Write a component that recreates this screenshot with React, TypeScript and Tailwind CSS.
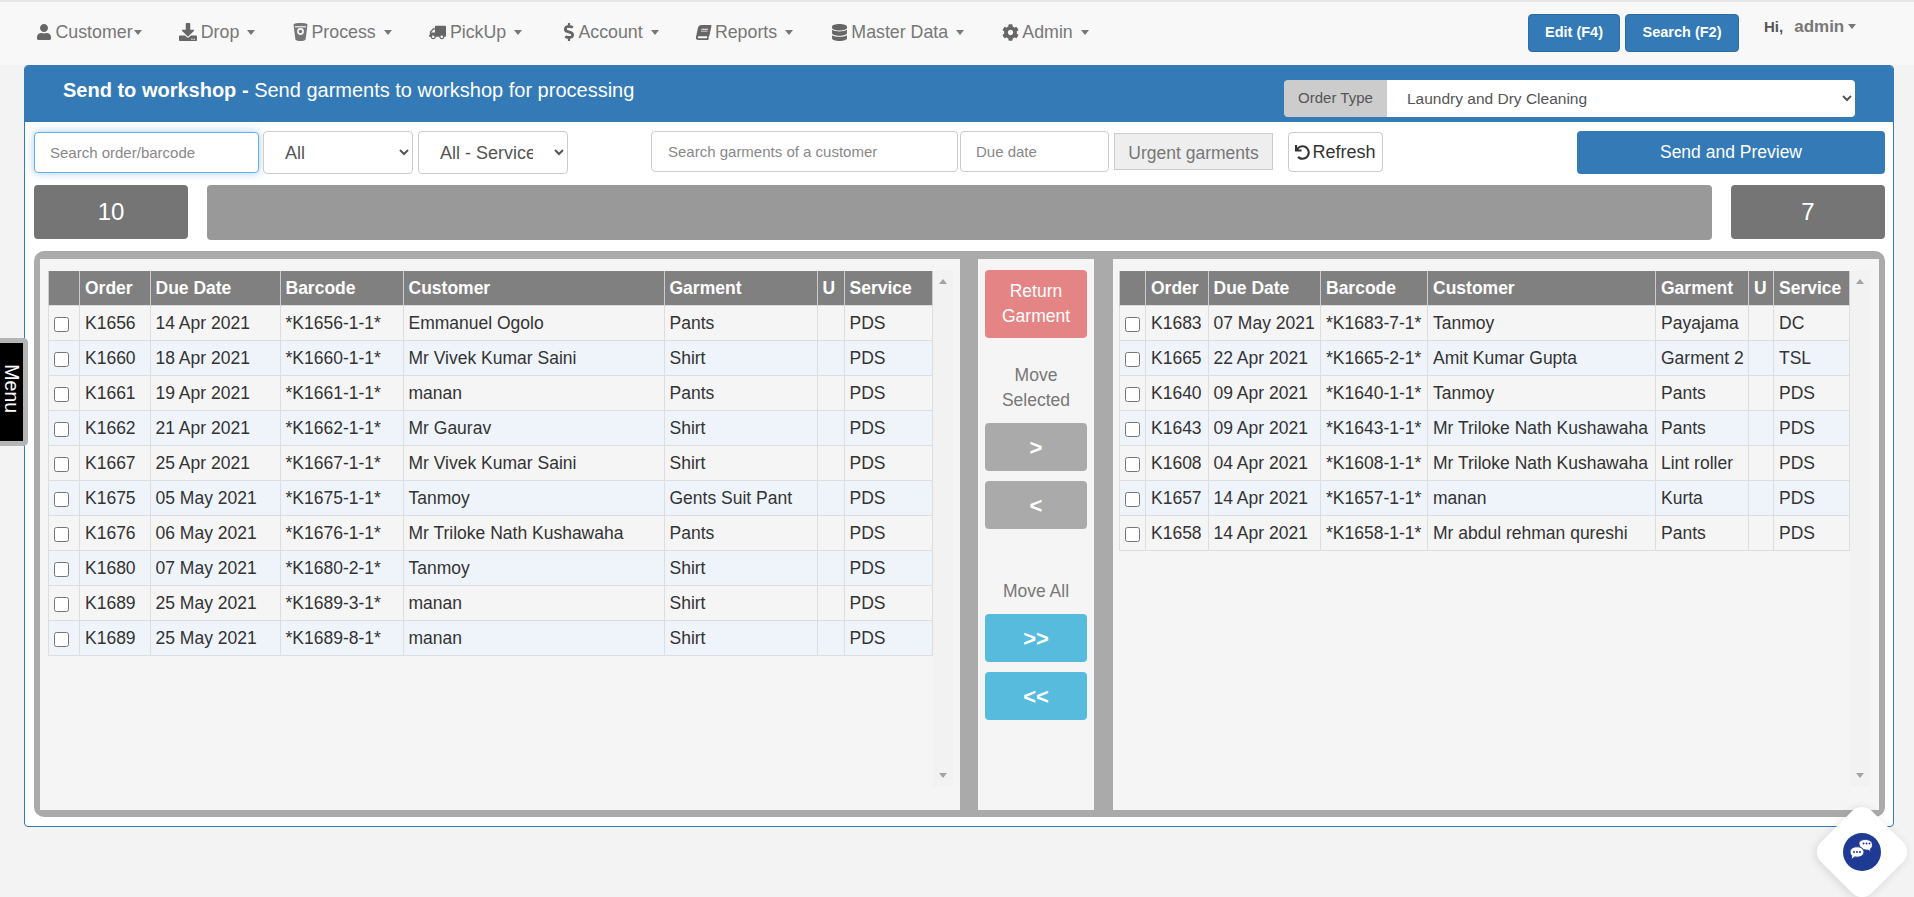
import React from 'react';
import { FaUser, FaDownload, FaTruck, FaDollarSign, FaBook, FaDatabase, FaCog, FaUndo } from 'react-icons/fa';

type Row = [string, string, string, string, string, string];

const LEFT_ROWS: Row[] = [
  ['K1656', '14 Apr 2021', '*K1656-1-1*', 'Emmanuel Ogolo', 'Pants', 'PDS'],
  ['K1660', '18 Apr 2021', '*K1660-1-1*', 'Mr Vivek Kumar Saini', 'Shirt', 'PDS'],
  ['K1661', '19 Apr 2021', '*K1661-1-1*', 'manan', 'Pants', 'PDS'],
  ['K1662', '21 Apr 2021', '*K1662-1-1*', 'Mr Gaurav', 'Shirt', 'PDS'],
  ['K1667', '25 Apr 2021', '*K1667-1-1*', 'Mr Vivek Kumar Saini', 'Shirt', 'PDS'],
  ['K1675', '05 May 2021', '*K1675-1-1*', 'Tanmoy', 'Gents Suit Pant', 'PDS'],
  ['K1676', '06 May 2021', '*K1676-1-1*', 'Mr Triloke Nath Kushawaha', 'Pants', 'PDS'],
  ['K1680', '07 May 2021', '*K1680-2-1*', 'Tanmoy', 'Shirt', 'PDS'],
  ['K1689', '25 May 2021', '*K1689-3-1*', 'manan', 'Shirt', 'PDS'],
  ['K1689', '25 May 2021', '*K1689-8-1*', 'manan', 'Shirt', 'PDS'],
];

const RIGHT_ROWS: Row[] = [
  ['K1683', '07 May 2021', '*K1683-7-1*', 'Tanmoy', 'Payajama', 'DC'],
  ['K1665', '22 Apr 2021', '*K1665-2-1*', 'Amit Kumar Gupta', 'Garment 2', 'TSL'],
  ['K1640', '09 Apr 2021', '*K1640-1-1*', 'Tanmoy', 'Pants', 'PDS'],
  ['K1643', '09 Apr 2021', '*K1643-1-1*', 'Mr Triloke Nath Kushawaha', 'Pants', 'PDS'],
  ['K1608', '04 Apr 2021', '*K1608-1-1*', 'Mr Triloke Nath Kushawaha', 'Lint roller', 'PDS'],
  ['K1657', '14 Apr 2021', '*K1657-1-1*', 'manan', 'Kurta', 'PDS'],
  ['K1658', '14 Apr 2021', '*K1658-1-1*', 'Mr abdul rehman qureshi', 'Pants', 'PDS'],
];

const HEADERS = ['', 'Order', 'Due Date', 'Barcode', 'Customer', 'Garment', 'U', 'Service'];
const LEFT_COLS = [31.5, 70.5, 130, 123, 261, 153, 27, 88];
const RIGHT_COLS = [26, 62.5, 112.5, 107, 228, 93, 25, 75.5];

function BucketIcon() {
  return (
    <svg width="15" height="20" viewBox="0 0 15 20" fill="#777">
      <path d="M0.5 2.5C2 .6 13 .6 14.5 2.5L12.6 17.5C11 19.6 4 19.6 2.4 17.5Z" />
      <circle cx="7.5" cy="9.5" r="3.4" fill="#f8f8f8" />
      <circle cx="7.5" cy="9.5" r="1.7" />
      <rect x="2" y="4.2" width="11" height="1.2" fill="#f8f8f8" />
    </svg>
  );
}

function Caret() {
  return <span className="inline-block w-0 h-0 border-x-[4.5px] border-t-[5px] border-x-transparent border-t-[#777]" />;
}

function NavItem({ icon, label, tight }: { icon: React.ReactNode; label: string; tight?: boolean }) {
  return (
    <div className="flex items-center text-[17.8px] text-[#777]">
      <span className="mr-[3.500px] flex items-center text-[#666]">{icon}</span>
      <span>{label}</span>
      <span className={tight ? 'ml-[1px] flex' : 'ml-[8px] flex'}>
        <Caret />
      </span>
    </div>
  );
}

function Grid({ rows, cols }: { rows: Row[]; cols: number[] }) {
  const width = cols.reduce((a, b) => a + b, 0);
  return (
    <table className="table-fixed border-collapse text-[17.5px] text-[#333]" style={{ width }}>
      <colgroup>
        {cols.map((c, i) => (
          <col key={i} style={{ width: c }} />
        ))}
      </colgroup>
      <thead>
        <tr className="h-[35px] bg-[#808080] text-white">
          {HEADERS.map((h, i) => (
            <th key={i} className="border-x border-[#ccc] pl-[5px] text-left font-bold whitespace-nowrap overflow-hidden">
              {h}
            </th>
          ))}
        </tr>
      </thead>
      <tbody>
        {rows.map((r, i) => (
          <tr key={i} className={i % 2 === 0 ? 'h-[35px] bg-[#f5f5f5]' : 'h-[35px] bg-[#eff4fb]'}>
            <td className="border border-[#ddd] pl-[5px] text-left">
              <input type="checkbox" className="w-[15px] h-[15px] align-middle" />
            </td>
            <td className="border border-[#ddd] pl-[5px] whitespace-nowrap">{r[0]}</td>
            <td className="border border-[#ddd] pl-[5px] whitespace-nowrap">{r[1]}</td>
            <td className="border border-[#ddd] pl-[5px] whitespace-nowrap">{r[2]}</td>
            <td className="border border-[#ddd] pl-[5px] whitespace-nowrap">{r[3]}</td>
            <td className="border border-[#ddd] pl-[5px] whitespace-nowrap">{r[4]}</td>
            <td className="border border-[#ddd]"></td>
            <td className="border border-[#ddd] pl-[5px] whitespace-nowrap">{r[5]}</td>
          </tr>
        ))}
      </tbody>
    </table>
  );
}

function ScrollTrack() {
  return (
    <div className="w-[20px] h-[515px] bg-[#f2f2f2] flex flex-col items-center justify-between pt-[8px] pb-[8px]">
      <span className="w-0 h-0 border-x-[4.5px] border-b-[5px] border-x-transparent border-b-[#a3a3a3]" />
      <span className="w-0 h-0 border-x-[4.5px] border-t-[5px] border-x-transparent border-t-[#a3a3a3]" />
    </div>
  );
}

function MoveButton({ label, color }: { label: string; color: string }) {
  return (
    <button className={`w-full h-[48px] rounded-[4px] text-white text-[22px] font-bold ${color}`}>{label}</button>
  );
}

export default function App() {
  return (
    <div className="relative h-[897px] overflow-hidden bg-[#f3f3f3] font-['Liberation_Sans',Arial,sans-serif]">
      {/* Top nav */}
      <nav className="h-[65px] bg-[#f8f8f8] border-t-2 border-[#e7e7e7] flex items-start pl-[36px] pr-[40px]">
        <div className="flex gap-[37.7px] mt-[17px]">
          <NavItem icon={<FaUser size={16} />} label="Customer" tight />
          <NavItem icon={<FaDownload size={18} />} label="Drop" />
          <NavItem icon={<BucketIcon />} label="Process" />
          <NavItem icon={<FaTruck size={17} className="-scale-x-100" />} label="PickUp" />
          <NavItem icon={<FaDollarSign size={18} className="-mr-[3px]" />} label="Account" />
          <NavItem icon={<FaBook size={15} className="-skew-x-12" />} label="Reports" />
          <NavItem icon={<FaDatabase size={17} />} label="Master Data" />
          <NavItem icon={<FaCog size={17} />} label="Admin" />
        </div>
        <div className="ml-auto flex items-start mt-[12px]">
          <button className="w-[92px] h-[38px] rounded-[4px] bg-[#337ab7] text-white text-[14.5px] font-bold border border-[#2e6da4]">
            Edit (F4)
          </button>
          <button className="ml-[5px] w-[114px] h-[38px] rounded-[4px] bg-[#337ab7] text-white text-[14.5px] font-bold border border-[#2e6da4]">
            Search (F2)
          </button>
          <div className="ml-[25px] w-[110px] flex items-center text-[#666]">
            <span className="text-[15px] font-bold text-[#555]">Hi,</span>
            <span className="ml-[11px] text-[17px] font-bold text-[#777]">admin</span>
            <span className="ml-[4px] flex">
              <Caret />
            </span>
          </div>
        </div>
      </nav>

      {/* Main panel */}
      <div className="ml-[24px] mr-[20px] h-[762px] bg-white border border-[#337ab7] rounded-[4px] overflow-hidden">
        <div className="h-[56px] bg-[#337ab7] flex items-start pl-[38px] pr-[38px] text-white">
          <div className="mt-[11px] text-[20px] leading-[26px]">
            <span className="font-bold">Send to workshop - </span>
            <span>Send garments to workshop for processing</span>
          </div>
          <div className="ml-auto mt-[14px] w-[571px] h-[37px] flex rounded-[4px] overflow-hidden">
            <span className="w-[103px] bg-[#ccc] text-[#555] text-[15px] flex items-center justify-center">Order Type</span>
            <select className="flex-1 bg-white text-[#555] text-[15.5px] pl-[16px] pr-[6px]">
              <option>Laundry and Dry Cleaning</option>
            </select>
          </div>
        </div>

        <div className="pl-[9px] pr-[8px]">
          {/* Filters */}
          <div className="mt-[9px] flex items-start h-[43px]">
            <input
              placeholder="Search order/barcode"
              className="mt-[1px] w-[225px] h-[41px] rounded-[4px] border border-[#66afe9] shadow-[0_0_8px_rgba(102,175,233,0.6)] bg-white px-[15px] text-[15px] placeholder:text-[#888]"
            />
            <select className="ml-[4px] w-[150px] h-[43px] rounded-[4px] border border-[#ccc] bg-white pl-[17px] pr-[4px] text-[18px] text-[#555]">
              <option>All</option>
            </select>
            <select className="ml-[5px] w-[150px] h-[43px] rounded-[4px] border border-[#ccc] bg-white pl-[17px] pr-[18px] text-[18px] text-[#555]">
              <option>All - Service</option>
            </select>
            <input
              placeholder="Search garments of a customer"
              className="ml-[83px] w-[307px] h-[41px] rounded-[4px] border border-[#ccc] bg-white px-[16px] text-[15px] placeholder:text-[#888]"
            />
            <input
              placeholder="Due date"
              className="ml-[2px] w-[149px] h-[41px] rounded-[4px] border border-[#ccc] bg-white px-[15px] text-[15px] placeholder:text-[#888]"
            />
            <button className="ml-[5px] mt-[2px] w-[159px] h-[37px] pt-[3px] bg-[#eee] border border-[#ccc] text-[17.5px] text-[#777]">
              Urgent garments
            </button>
            <button className="ml-[15px] mt-[1px] w-[95px] h-[40px] rounded-[4px] bg-white border border-[#ccc] text-[18px] text-[#333] flex items-center justify-center">
              <FaUndo size={15} className="mr-[2px]" />
              Refresh
            </button>
            <button className="ml-auto w-[308px] h-[43px] rounded-[4px] bg-[#337ab7] text-white text-[17.5px]">
              Send and Preview
            </button>
          </div>

          {/* Counters */}
          <div className="mt-[11px] flex h-[55px] text-white text-[24px]">
            <div className="w-[154px] h-[54px] rounded-[4px] bg-[#757575] flex items-center justify-center">10</div>
            <div className="ml-[19px] flex-1 rounded-[4px] bg-[#999]"></div>
            <div className="ml-[19px] w-[154px] h-[54px] rounded-[4px] bg-[#757575] flex items-center justify-center">7</div>
          </div>

          {/* Lists */}
          <div className="mt-[11px] h-[566px] bg-[#aaa] rounded-[10px] pt-[8px] pb-[7px] px-[6px] flex">
            <div className="w-[920px] bg-[#f5f5f5] pl-[7.5px] pt-[11.5px] flex items-start">
              <Grid rows={LEFT_ROWS} cols={LEFT_COLS} />
              <ScrollTrack />
            </div>
            <div className="ml-[18px] w-[116px] bg-[#f5f5f5] px-[7px] pt-[11px] flex flex-col text-center">
              <button className="h-[68px] rounded-[4px] bg-[#e48484] text-white text-[17.5px] leading-[25px]">
                Return
                <br />
                Garment
              </button>
              <div className="mt-[25px] text-[17.5px] leading-[25px] text-[#777]">
                Move
                <br />
                Selected
              </div>
              <div className="mt-[10px] flex flex-col gap-[10px]">
                <MoveButton label=">" color="bg-[#aaa]" />
                <MoveButton label="<" color="bg-[#aaa]" />
              </div>
              <div className="mt-[50px] text-[17.5px] leading-[25px] text-[#777]">Move All</div>
              <div className="mt-[10px] flex flex-col gap-[10px]">
                <MoveButton label=">>" color="bg-[#56bbdc]" />
                <MoveButton label="<<" color="bg-[#56bbdc]" />
              </div>
            </div>
            <div className="ml-[19px] flex-1 bg-[#f5f5f5] pl-[6px] pt-[11.5px] flex items-start">
              <Grid rows={RIGHT_ROWS} cols={RIGHT_COLS} />
              <ScrollTrack />
            </div>
          </div>
        </div>
      </div>

      {/* Side menu tab */}
      <div className="absolute left-0 top-[338px] w-[28px] h-[108px] bg-black border-[5px] border-l-0 border-[#b5b5b5] rounded-r-[5px] flex items-center justify-center">
        <span className="rotate-90 -translate-y-[3px] text-white text-[19.5px] leading-none">Menu</span>
      </div>

      {/* Chat bubble */}
      <div className="absolute right-[16px] bottom-[9px] w-[72px] h-[72px] bg-white rotate-45 rounded-[14px] shadow-[0_2px_10px_rgba(0,0,0,0.12)] flex items-center justify-center">
        <div className="-rotate-45 w-[38px] h-[38px] rounded-full bg-[#1f3a93] flex items-center justify-center">
          <svg width="28" height="26" viewBox="0 0 28 26">
            <path d="M11 4.5C11 1.8 14 .5 17.5 .5S24.5 2.2 24.5 6c0 2-1 3.4-2.4 4.3l1.4 3-3.6-2.2C16 11.5 11 9 11 4.5Z" fill="#fff" stroke="#1f3a93" />
            <path d="M2 13c0-3.2 3.2-5.2 7-5.2s7 2 7 5.2-3.2 5.2-7 5.2c-.9 0-1.6-.1-2.4-.3L3 21l.8-4.2C2.700 15.800 2 14.500 2 13Z" fill="#fff" stroke="#1f3a93" />
            <circle cx="6" cy="13" r="1" fill="#1f3a93" />
            <circle cx="9" cy="13" r="1" fill="#1f3a93" />
            <circle cx="12" cy="13" r="1" fill="#1f3a93" />
            <circle cx="15.500" cy="4.500" r="1" fill="#1f3a93" />
            <circle cx="18.500" cy="4.500" r="1" fill="#1f3a93" />
            <circle cx="21.500" cy="4.500" r="1" fill="#1f3a93" />
          </svg>
        </div>
      </div>
    </div>
  );
}
